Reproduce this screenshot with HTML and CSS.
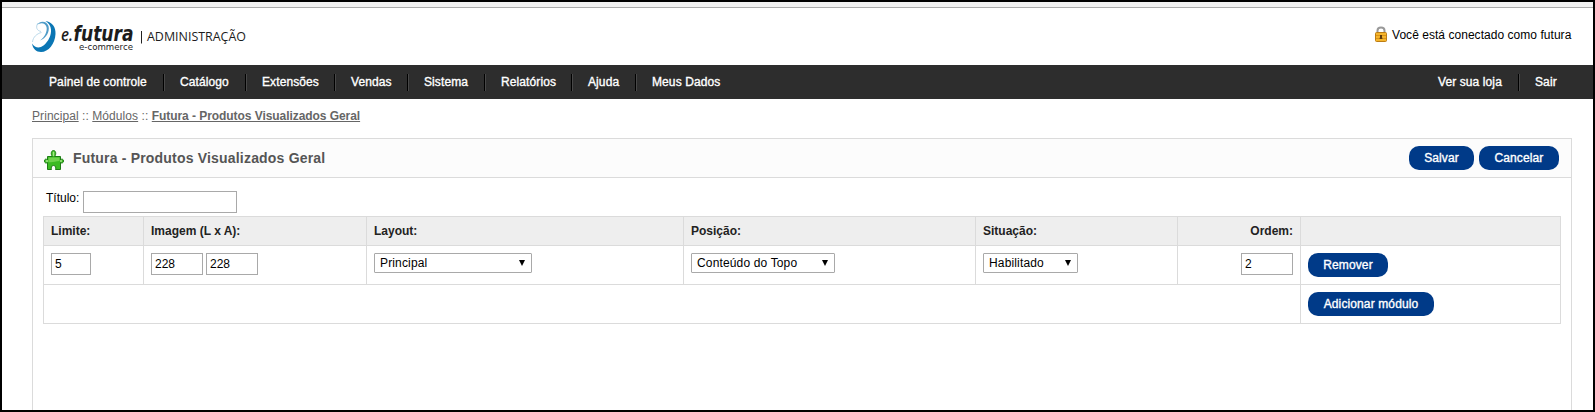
FILE: index.html
```
<!DOCTYPE html>
<html lang="pt-br">
<head>
    <meta charset="UTF-8">
    <title>Futura - Produtos Visualizados Geral</title>
    <link rel="stylesheet" href="styles.css">
</head>
<body>
    <div id="container">
        <div class="topbar"></div>

        <!-- Header -->
        <div id="header">
            <svg class="logo" width="220" height="36" viewBox="32 19 220 36">
                <path d="M45.500 21C52 22 56 27 55.500 34C55 44 48.500 52 41 52C36 52 33 49 32 43.500C35 48 39.500 48.500 43.500 45.500C48.500 41.500 51.500 35 51 29.500C50.700 26 49 23 45.500 21Z" fill="#0a76b4"/>
                <path d="M36.500 25.500C39 20.500 46.500 20 48.500 26C50 32 46 38.500 40 40.500C45 37 47.500 31 46.500 27C45.500 22.500 40 22 36.500 25.500Z" fill="#4f9cc8"/>
                <path d="M38 23C35.500 27 36.500 30.500 41 31.500M32.500 42C33 37 37 33.500 41.500 32.500" fill="none" stroke="#a9cfe4" stroke-width="0.800"/>
                <text x="61" y="40.500" class="logo-e" textLength="12" lengthAdjust="spacingAndGlyphs">e.</text>
                <text x="73.500" y="40.500" class="logo-name" textLength="60" lengthAdjust="spacingAndGlyphs">futura</text>
                <text x="79" y="50" class="logo-sub" textLength="54" lengthAdjust="spacingAndGlyphs">e-commerce</text>
                <path d="M141.500 31V43.500" stroke="#222" stroke-width="1"/>
                <text x="147" y="41" class="logo-adm" textLength="99" lengthAdjust="spacingAndGlyphs">ADMINISTRAÇÃO</text>
            </svg>
            <div class="user">
                <svg width="14" height="16" viewBox="0 0 14 16">
                    <path d="M3.500 7V4.500C3.500 0.500 10.500 0.500 10.500 4.500V7" fill="none" stroke="#999" stroke-width="2"/>
                    <rect x="1.500" y="6.500" width="11" height="9" rx="1" fill="#f5b52c" stroke="#bd7d13"/>
                    <path d="M2 9.500H12M2 12.500H12" stroke="#d9931b"/>
                    <path d="M6 9H8V11L8.500 13H5.500L6 11Z" fill="#5e3b0c"/>
                </svg>
                <span class="t-user">Você está conectado como futura</span>
            </div>
        </div>

        <!-- Menu -->
        <div id="menu">
            <ul class="left">
                <li class="m1">Painel de controle</li>
                <li class="m2">Catálogo</li>
                <li class="m3">Extensões</li>
                <li class="m4">Vendas</li>
                <li class="m5">Sistema</li>
                <li class="m6">Relatórios</li>
                <li class="m7">Ajuda</li>
                <li>Meus Dados</li>
            </ul>
            <ul class="right">
                <li class="m8">Ver sua loja</li>
                <li class="m9">Sair</li>
            </ul>
        </div>

        <div id="content">
            <div class="breadcrumb"><a>Principal</a> :: <a>Módulos</a> :: <a class="current">Futura - Produtos Visualizados Geral</a></div>

            <div class="box">
                <div class="heading">
                    <svg width="20" height="20" viewBox="0 0 20 20">
                        <path d="M3.500 6.500H8.500C6.500 4.500 7 0.500 9.500 0.500S12.500 4.500 10.500 6.500H16.500V10C17.500 8.500 19.500 9 19.500 11S17.500 13.500 16.500 12.500V19.500H11.500C12 18 12 15.500 9.500 15.500S7 18 7.500 19.500H3.500V12.500C2 13.500 0.500 13 0.500 11S2 8.500 3.500 10Z" fill="#3bbb22" stroke="#1c7d13"/>
                        <path d="M4.500 12V7.500H15.500V11C11 11 8 13 4.500 12Z" fill="#6fd24d"/>
                        <path d="M9.500 1.800V6M1.800 11H4M16 11H18" stroke="#a4e888" stroke-width="1.500"/>
                    </svg>
                    <h1>Futura - Produtos Visualizados Geral</h1>
                    <div class="buttons">
                        <a class="button b-save">Salvar</a>
                        <a class="button b-cancel">Cancelar</a>
                    </div>
                </div>
                <div class="content">
                    <div class="title-row">
                        <label>Título:</label>
                        <input type="text" class="title-input">
                    </div>
                    <table class="list">
                        <colgroup>
                            <col class="c1"><col class="c2"><col class="c3"><col class="c4"><col class="c5"><col class="c6"><col class="c7">
                        </colgroup>
                        <thead>
                            <tr>
                                <td>Limite:</td>
                                <td>Imagem (L x A):</td>
                                <td>Layout:</td>
                                <td>Posição:</td>
                                <td>Situação:</td>
                                <td class="r">Ordem:</td>
                                <td></td>
                            </tr>
                        </thead>
                        <tbody>
                            <tr>
                                <td><div class="fields"><input type="text" class="small" value="5"></div></td>
                                <td><div class="fields"><input type="text" value="228"><input type="text" value="228"></div></td>
                                <td><div class="select s-layout"><span>Principal</span><i></i></div></td>
                                <td><div class="select s-position"><span>Conteúdo do Topo</span><i></i></div></td>
                                <td><div class="select s-status"><span>Habilitado</span><i></i></div></td>
                                <td><div class="fields end"><input type="text" value="2"></div></td>
                                <td><a class="button b-remove">Remover</a></td>
                            </tr>
                            <tr>
                                <td colspan="6"></td>
                                <td><a class="button b-add">Adicionar módulo</a></td>
                            </tr>
                        </tbody>
                    </table>
                </div>
            </div>
        </div>
    </div>
</body>
</html>
```
FILE: styles.css
```
* {
    box-sizing: border-box;
}

body {
    margin: 0;
    font-family: "Liberation Sans", Arial, sans-serif;
    font-size: 12px;
    color: #000;
    background: #fff;
}

#container {
    display: flex;
    flex-direction: column;
    height: 412px;
    border: 2px solid #000;
    overflow: hidden;
}

.topbar {
    flex: none;
    height: 6px;
    background: #f1f1f1;
    border-bottom: 1px solid #aaa;
}

/* Header */
#header {
    flex: none;
    display: flex;
    justify-content: space-between;
    height: 57px;
    padding: 11px 20px 0 30px;
}

.logo {
    overflow: visible;
}

.logo text {
    font-family: "Open Sans", "Noto Sans", sans-serif;
    fill: #1c1c1c;
}

.logo .logo-e {
    font-size: 18px;
    font-style: italic;
    font-weight: 600;
}

.logo .logo-name {
    font-family: "DejaVu Sans", sans-serif;
    font-size: 22px;
    font-style: italic;
    font-weight: bold;
}

.logo .logo-sub {
    font-family: "DejaVu Sans", sans-serif;
    font-size: 9px;
}

.logo .logo-adm {
    font-size: 13px;
}

.user {
    display: flex;
    gap: 4px;
    height: 16px;
    margin-top: 7px;
    line-height: 18px;
}

.t-user {
    width: 181px;
    white-space: nowrap;
    letter-spacing: 0.04px;
}

/* Menu */
#menu {
    flex: none;
    display: flex;
    justify-content: space-between;
    height: 34px;
    padding: 9px 19px 0 31px;
    background: #2d2d2d;
}

#menu ul {
    display: flex;
    margin: 0;
    padding: 0;
    list-style: none;
}

#menu li {
    height: 17px;
    padding-left: 16px;
    line-height: 17px;
    color: #fff;
    white-space: nowrap;
    letter-spacing: 0.1px;
    -webkit-text-stroke: 0.35px #fff;
}

#menu li + li {
    border-left: 1px solid #000;
    box-shadow: inset 1px 0 #484848;
}

#menu .m1 { width: 130px; }
#menu .m2 { width: 82px; }
#menu .m3 { width: 89px; }
#menu .m4 { width: 73px; }
#menu .m5 { width: 77px; }
#menu .m6 { width: 87px; }
#menu .m7 { width: 64px; }
#menu .m8 { width: 96px; }
#menu .m9 { width: 56px; }

/* Content */
#content {
    flex: 1;
    display: flex;
    flex-direction: column;
    padding: 9px 21px 0 30px;
}

.breadcrumb {
    height: 30px;
    line-height: 16px;
    color: #666;
    letter-spacing: 0.07px;
}

.breadcrumb a {
    text-decoration: underline;
}

.breadcrumb .current {
    font-weight: bold;
    letter-spacing: -0.06px;
}

.box {
    flex: 1;
    border: 1px solid #dbdbdb;
    border-bottom: none;
}

.heading {
    display: flex;
    align-items: center;
    height: 39px;
    padding: 0 12px 0 11px;
    background: #fcfcfc;
    border-bottom: 1px solid #dbdbdb;
}

.heading svg {
    margin-top: 4px;
}

.heading h1 {
    flex: 1;
    margin: 0 0 0 9px;
    font-size: 14px;
    color: #555;
    letter-spacing: 0.19px;
}

.buttons {
    display: flex;
    gap: 5px;
    margin-top: -1px;
}

.button {
    display: block;
    height: 24px;
    border-radius: 10px;
    background: #003a88;
    color: #fff;
    line-height: 24px;
    text-align: center;
    letter-spacing: 0.12px;
    -webkit-text-stroke: 0.35px #fff;
}

.b-save { width: 65px; }
.b-cancel { width: 80px; }
.b-remove { width: 80px; }
.b-add { width: 126px; }

.content {
    padding: 13px 10px 0;
}

.title-row {
    display: flex;
    gap: 4px;
    height: 25px;
    padding-left: 3px;
}

.title-row label {
    width: 33px;
    line-height: 15px;
}

input {
    width: 52px;
    height: 22px;
    margin: 0;
    padding: 0 3px;
    border: 1px solid #a9a9a9;
    background: #fff;
    color: #000;
    font: 12px "Liberation Sans", Arial, sans-serif;
}

.title-input {
    width: 154px;
}

.small {
    width: 40px;
}

.fields {
    display: flex;
    gap: 3px;
}

.fields.end {
    justify-content: flex-end;
}

/* Module list */
.list {
    width: 1518px;
    table-layout: fixed;
    border-collapse: collapse;
}

.list td {
    height: 39px;
    padding: 7px;
    border: 1px solid #dbdbdb;
    vertical-align: top;
}

.list thead td {
    height: 29px;
    background: #eee;
    font-weight: bold;
    color: #222;
    line-height: 14px;
}

.list .r {
    text-align: right;
}

.c1 { width: 100px; }
.c2 { width: 223px; }
.c3 { width: 317px; }
.c4 { width: 292px; }
.c5 { width: 202px; }
.c6 { width: 123px; }
.c7 { width: 260px; }

.select {
    display: flex;
    justify-content: space-between;
    align-items: center;
    height: 20px;
    padding: 0 6px 0 5px;
    border: 1px solid #a9a9a9;
    border-radius: 1px;
    letter-spacing: 0.15px;
}

.select i {
    border: 3px solid transparent;
    border-top: 6px solid #000;
    border-bottom: none;
}

.s-layout { width: 158px; }
.s-position { width: 144px; }
.s-status { width: 95px; }
```
